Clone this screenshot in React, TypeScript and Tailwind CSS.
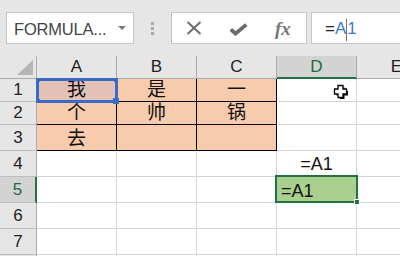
import React from "react";

const FONT = { fontFamily: '"Liberation Sans", "Noto Sans CJK SC", sans-serif' };

const cols = ["A", "B", "C", "D", "E"];
const rowHeights = ["h-[23px]", "h-[23px]", "h-[26px]", "h-[26px]", "h-[26px]", "h-[26px]", "h-[26px]", "h-[26px]"];
const data: string[][] = [
  ["我", "是", "一", "", ""],
  ["个", "帅", "锅", "", ""],
  ["去", "", "", "", ""],
  ["", "", "", "=A1", ""],
  ["", "", "", "=A1", ""],
  ["", "", "", "", ""],
  ["", "", "", "", ""],
  ["", "", "", "", ""],
];

function Toolbar() {
  return (
    <div className="h-[56px] bg-[#e6e6e6] flex items-start pt-[12px] pl-[6px]">
      <div className="w-[128px] h-[32px] bg-white border border-[#c6c6c6] flex items-center pl-[7px] pr-[7px]">
        <span className="text-[16.5px] text-[#444] flex-1 leading-none pt-[2px] tracking-[-0.2px]">FORMULA...</span>
        <svg width="8" height="5" viewBox="0 0 8 5">
          <polygon points="0,0 8,0 4,4" fill="#7a7a7a" />
        </svg>
      </div>
      <div className="w-[37px] h-[32px] flex flex-col items-center justify-center gap-[2px]">
        <div className="w-[3px] h-[3px] bg-[#a8a8a8]" />
        <div className="w-[3px] h-[3px] bg-[#a8a8a8]" />
        <div className="w-[3px] h-[3px] bg-[#a8a8a8]" />
      </div>
      <div className="w-[136px] h-[32px] bg-white border border-[#c6c6c6] flex items-center">
        <svg className="ml-[14px]" width="16" height="14" viewBox="0 0 16 14">
          <line x1="1.5" y1="1" x2="14.5" y2="13" stroke="#6e6e6e" strokeWidth="2" />
          <line x1="14.5" y1="1" x2="1.5" y2="13" stroke="#6e6e6e" strokeWidth="2" />
        </svg>
        <svg className="ml-[27px] mt-[2px]" width="19" height="13" viewBox="0 0 19 13">
          <polyline points="1.8,6.3 6.5,10.6 17.3,1.6" fill="none" stroke="#6a6a6a" strokeWidth="3.8" />
        </svg>
        <span
          className="ml-[27px] text-[19px] italic font-semibold text-[#767676] leading-none"
          style={{ fontFamily: '"Liberation Serif", serif' }}
        >
          fx
        </span>
      </div>
      <div className="ml-[4px] flex-1 h-[32px] bg-white border-y border-l border-[#c6c6c6] flex items-center pl-[13px]">
        <span className="text-[17px] text-[#222] leading-none">=</span>
        <span className="text-[17px] text-[#3c78d8] leading-none">A</span>
        <span className="w-[1px] h-[22px] bg-[#777] mt-[4px]" />
        <span className="text-[17px] text-[#3c78d8] leading-none">1</span>
      </div>
    </div>
  );
}

function Grid() {
  return (
    <div className="relative">
      <div className="grid grid-cols-[37px_80px_80px_80px_80px_80px] w-[437px]">
        <div className="h-[23px] bg-[#e6e6e6] border-r border-b border-[#ababab] flex items-end justify-end pr-[3px] pb-[3px]">
          <svg width="16" height="15" viewBox="0 0 16 15">
            <polygon points="16,0 16,15 0,15" fill="#b5b5b5" />
          </svg>
        </div>
        {cols.map((c) =>
          c === "D" ? (
            <div
              key={c}
              className="h-[23px] bg-[#d3d3d3] border-r border-[#ababab] border-b-2 border-b-[#217346] flex items-center justify-center text-[17px] text-[#1f6b42]"
            >
              {c}
            </div>
          ) : (
            <div
              key={c}
              className="h-[23px] bg-[#e6e6e6] border-r border-b border-[#ababab] flex items-center justify-center text-[17px] text-[#222]"
            >
              {c}
            </div>
          )
        )}
        {data.map((row, ri) => (
          <React.Fragment key={ri}>
            {ri === 4 ? (
              <div
                className={`${rowHeights[ri]} bg-[#d3d3d3] border-r-2 border-r-[#217346] border-b border-b-[#bdbdbd] flex items-center justify-center text-[17px] text-[#1f6b42]`}
              >
                {ri + 1}
              </div>
            ) : (
              <div
                className={`${rowHeights[ri]} bg-[#e6e6e6] border-r border-r-[#ababab] border-b border-b-[#bdbdbd] flex items-center justify-center text-[17px] text-[#222]`}
              >
                {ri + 1}
              </div>
            )}
            {row.map((v, ci) => {
              const formatted = ri < 3 && ci < 3;
              const base = `${rowHeights[ri]} border-r border-b flex items-end text-[#111]`;
              if (formatted) {
                const sel = ri === 0 && ci === 0;
                return (
                  <div
                    key={ci}
                    className={`${base} justify-center pb-[0px] leading-[22px] border-black text-[19px] ${sel ? "bg-[#e3c1b6]" : "bg-[#f8cbad]"}`}
                  >
                    {v}
                  </div>
                );
              }
              if (ri === 3 && ci === 3) {
                return (
                  <div key={ci} className={`${base} justify-center pb-[2px] leading-[20px] border-[#d4d4d4] bg-white text-[18px]`}>
                    {v}
                  </div>
                );
              }
              if (ri === 4 && ci === 3) {
                return (
                  <div key={ci} className={`${base} justify-start pl-[4px] pb-[1px] leading-[20px] border-[#d4d4d4] bg-[#a9d08e] text-[18px]`}>
                    {v}
                  </div>
                );
              }
              return <div key={ci} className={`${base} border-[#d4d4d4] bg-white`}>{v}</div>;
            })}
          </React.Fragment>
        ))}
      </div>

      {/* A1 reference highlight */}
      <div className="absolute left-[36px] top-[22px] w-[82px] h-[25px] border-[3px] border-[#3a6bc6] pointer-events-none" />
      <div className="absolute left-[36px] top-[22px] w-[4px] h-[4px] bg-[#3a6bc6]" />
      <div className="absolute left-[114px] top-[22px] w-[4px] h-[4px] bg-[#3a6bc6]" />
      <div className="absolute left-[36px] top-[43px] w-[4px] h-[4px] bg-[#3a6bc6]" />
      <div className="absolute left-[113px] top-[42px] w-[6px] h-[6px] bg-[#3a6bc6]" />

      {/* D5 selection */}
      <div className="absolute left-[275px] top-[119px] w-[83px] h-[28px] border-2 border-[#217346] pointer-events-none" />
      <div className="absolute left-[354px] top-[143px] w-[6px] h-[6px] bg-[#217346] border border-white" />

      {/* fat cross cursor */}
      <svg className="absolute left-[333px] top-[28px]" width="16" height="16" viewBox="0 0 16 16">
        <path d="M6 2.5 H10.5 V6 H14 V10.5 H10.5 V14 H6 V10.5 H2.5 V6 H6 Z" fill="black" transform="translate(1 1)" />
        <path d="M5 1.5 H10 V5 H13.5 V10 H10 V13.5 H5 V10 H1.5 V5 H5 Z" fill="white" stroke="black" strokeWidth="1.3" />
      </svg>
    </div>
  );
}

export default function App() {
  return (
    <div className="w-[400px] h-[256px] overflow-hidden bg-white" style={FONT}>
      <Toolbar />
      <Grid />
    </div>
  );
}
